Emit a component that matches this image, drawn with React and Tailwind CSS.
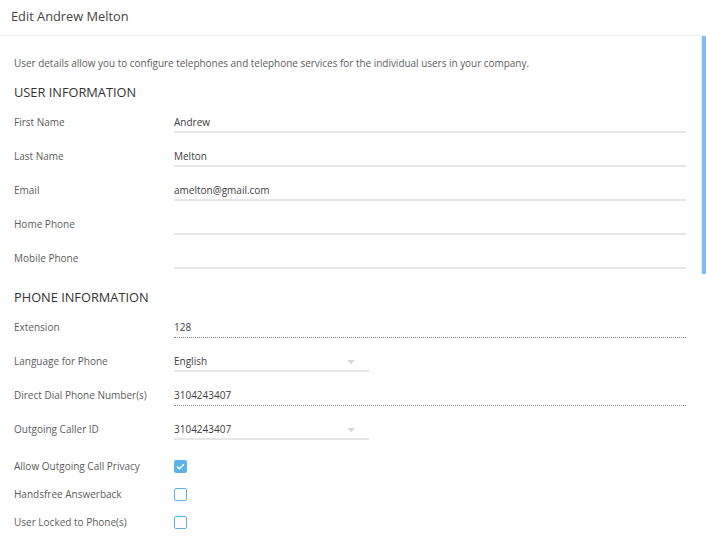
const userFields = [
  { label: "First Name", value: "Andrew" },
  { label: "Last Name", value: "Melton" },
  { label: "Email", value: "amelton@gmail.com" },
  { label: "Home Phone", value: "" },
  { label: "Mobile Phone", value: "" },
];

const checks = [
  { label: "Allow Outgoing Call Privacy", checked: true },
  { label: "Handsfree Answerback", checked: false },
  { label: "User Locked to Phone(s)", checked: false },
];

function Row({ label, children }) {
  return (
    <div className="flex h-[34px]">
      <div className="w-[160px] pt-[9px] leading-[16px] text-[10px] text-[#5c5c5c]">{label}</div>
      {children}
    </div>
  );
}

function TextInput({ value }) {
  return (
    <div className="flex-1 pt-[9px] leading-[16px] h-[28px] text-[10px] text-[#3d3d3d] border-b-2 border-[#e6e6e6]">
      {value}
    </div>
  );
}

function DottedInput({ value }) {
  return (
    <div className="flex-1 pt-[9px] leading-[16px] h-[28px] text-[10px] text-[#3d3d3d] border-b border-dotted border-[#888]">
      {value}
    </div>
  );
}

function Select({ value }) {
  return (
    <div className="w-[195px] flex items-start justify-between pt-[9px] leading-[16px] h-[28px] text-[10px] text-[#3d3d3d] border-b-2 border-[#e6e6e6]">
      <span>{value}</span>
      <span className="mr-[14px] mt-[7px] w-0 h-0 border-l-[4px] border-r-[4px] border-t-[4px] border-l-transparent border-r-transparent border-t-[#d6d6d6]"></span>
    </div>
  );
}

function Checkbox({ checked }) {
  return checked ? (
    <div className="w-[13px] h-[13px] rounded-[2px] bg-[#5cb3e6] flex items-center justify-center">
      <svg width="9" height="7" viewBox="0 0 9 7" fill="none">
        <path d="M1 3.5 L3.4 5.8 L8 1.2" stroke="white" strokeWidth="1.4" />
      </svg>
    </div>
  ) : (
    <div className="w-[13px] h-[13px] rounded-[2px] border-[1.5px] border-[#5cb3e6] bg-white"></div>
  );
}

export default function App() {
  return (
    <div className="w-[706px] h-[551px] bg-white overflow-hidden" style={{ fontFamily: '"Open Sans", sans-serif' }}>
      <div className="h-[36px] border-b border-[#eeeeee] pl-[11px] pt-[6px] text-[12.8px] leading-[20px] text-[#444]">
        Edit Andrew Melton
      </div>
      <div className="flex">
        <div className="flex-1 pl-[14px]">
          <p className="pt-[19px] text-[9.95px] leading-[16px] text-[#5c5c5c]">
            User details allow you to configure telephones and telephone services for the individual users in your company.
          </p>
          <h2 className="mt-[12px] mb-[4px] text-[12.8px] leading-[18px] text-[#333]">USER INFORMATION</h2>
          {userFields.map((f) => (
            <Row key={f.label} label={f.label}>
              <TextInput value={f.value} />
            </Row>
          ))}
          <h2 className="mt-[13px] mb-[4px] text-[12.8px] leading-[18px] text-[#333]">PHONE INFORMATION</h2>
          <Row label="Extension">
            <DottedInput value="128" />
          </Row>
          <Row label="Language for Phone">
            <Select value="English" />
          </Row>
          <Row label="Direct Dial Phone Number(s)">
            <DottedInput value="3104243407" />
          </Row>
          <Row label="Outgoing Caller ID">
            <Select value="3104243407" />
          </Row>
          <div className="mt-[6px]">
            {checks.map((c) => (
              <div key={c.label} className="flex items-center h-[28px]">
                <div className="w-[160px] text-[10px] leading-[16px] text-[#5c5c5c]">{c.label}</div>
                <Checkbox checked={c.checked} />
              </div>
            ))}
          </div>
        </div>
        <div className="w-[20px] pl-[16px]">
          <div className="w-[4px] h-[238px] bg-[#7cbdf4] rounded-[1px] shadow-[-1px_0_1px_rgba(0,0,0,0.08)]"></div>
        </div>
      </div>
    </div>
  );
}
